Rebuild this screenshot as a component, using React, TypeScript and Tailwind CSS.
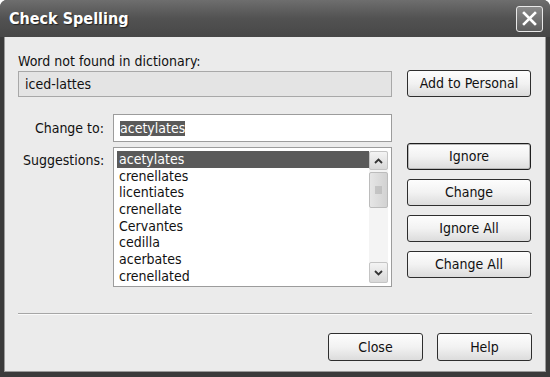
import React from "react";

const suggestions = [
  "acetylates",
  "crenellates",
  "licentiates",
  "crenellate",
  "Cervantes",
  "cedilla",
  "acerbates",
  "crenellated",
];

function XpButton({ label, wide, primary }: { label: string; wide?: boolean; primary?: boolean }) {
  return (
    <button
      className={`flex items-center justify-center rounded-[3px] border bg-gradient-to-b from-[#fdfdfd] via-[#f2f2f2] to-[#dcdcdc] text-[14px] text-[#111] ${
        primary ? "border-[#1e1e1e] shadow-[inset_0_0_0_1px_#b8b8b8]" : "border-[#2e2e2e]"
      } ${wide ? "h-[27px] w-[124px]" : "h-[28px] w-[95px]"}`}
    >
      {label}
    </button>
  );
}

export default function App() {
  return (
    <div
      className="flex h-[377px] w-[550px] flex-col overflow-hidden rounded-t-[7px] bg-[#3b3b3b]"
      style={{ fontFamily: '"DejaVu Sans Condensed", Tahoma, "DejaVu Sans", sans-serif' }}
    >
      {/* title bar */}
      <div className="flex h-[37px] items-center justify-between bg-gradient-to-b from-[#6e6e6e] via-[#525252] to-[#474747] pl-[9px] pr-[7px]">
        <span className="text-[16px] font-bold text-white [text-shadow:1px_1px_1px_#222]">Check Spelling</span>
        <div className="flex h-[26px] w-[27px] items-center justify-center rounded-[3px] border border-[#e8e8e8] bg-gradient-to-b from-[#8a8a8a] to-[#5e5e5e]">
          <svg width="15" height="15" viewBox="0 0 15 15">
            <path d="M2 2 L13 13 M13 2 L2 13" stroke="white" strokeWidth="2.6" strokeLinecap="square" />
          </svg>
        </div>
      </div>

      {/* body */}
      <div className="mx-[4px] mb-[5px] flex flex-1 flex-col border-x border-b border-[#9a9a9a] bg-[#ebebeb] pl-[13px] pr-[13px] text-[14px] text-[#111]">
        <div className="mt-[15px] flex">
          <div className="flex w-[374px] flex-col">
            <div className="h-[18px] leading-[18px]">Word not found in dictionary:</div>
            <div className="mt-[1px] flex h-[26px] items-center border border-[#a8a8a8] bg-[#e4e4e4] pl-[6px]">iced-lattes</div>
          </div>
          <div className="ml-[15px] mt-[18px]">
            <XpButton label="Add to Personal" wide />
          </div>
        </div>

        <div className="mt-[17px] flex items-center">
          <div className="w-[86px] text-right">Change to:</div>
          <div className="ml-[9px] flex h-[28px] w-[279px] items-center border border-[#9c9c9c] bg-white pl-[6px]">
            <span className="bg-[#5a5a5a] leading-[15px] text-white">acetylates</span>
          </div>
        </div>

        <div className="mt-[5px] flex">
          <div className="w-[95px] pl-[5px] pt-[3px]">Suggestions:</div>
          <div className="flex h-[140px] w-[279px] border border-[#9c9c9c] bg-white p-[3px]">
            <div className="flex flex-1 flex-col">
              {suggestions.map((s, i) => (
                <div
                  key={s}
                  className={`h-[16.7px] pl-[2px] leading-[16.7px] ${i === 0 ? "bg-[#5a5a5a] text-white" : ""}`}
                >
                  {s}
                </div>
              ))}
            </div>
            <div className="flex w-[19px] flex-col justify-between bg-[#f4f4f4]">
              <div className="flex flex-col gap-[2px]">
                <div className="flex h-[19px] items-center justify-center rounded-[2px] border border-[#c4c4c4] bg-gradient-to-b from-[#f4f4f4] to-[#d8d8d8]">
                  <svg width="9" height="6" viewBox="0 0 9 6">
                    <path d="M1 5 L4.5 1.5 L8 5" stroke="#333" strokeWidth="1.8" fill="none" />
                  </svg>
                </div>
                <div className="flex h-[36px] items-center justify-center rounded-[2px] border border-[#bcbcbc] bg-gradient-to-r from-[#e6e6e6] to-[#d2d2d2]">
                  <svg width="7" height="8" viewBox="0 0 7 8">
                    <path d="M0 1h7M0 3h7M0 5h7M0 7h7" stroke="#aaa" strokeWidth="1" />
                  </svg>
                </div>
              </div>
              <div className="flex h-[21px] items-center justify-center rounded-[2px] border border-[#c4c4c4] bg-gradient-to-b from-[#f4f4f4] to-[#d8d8d8]">
                <svg width="9" height="6" viewBox="0 0 9 6">
                  <path d="M1 1 L4.5 4.5 L8 1" stroke="#333" strokeWidth="1.8" fill="none" />
                </svg>
              </div>
            </div>
          </div>
          <div className="ml-[15px] -mt-[4px] flex flex-col gap-[9px]">
            <XpButton label="Ignore" wide primary />
            <XpButton label="Change" wide />
            <XpButton label="Ignore All" wide />
            <XpButton label="Change All" wide />
          </div>
        </div>

        <div className="mt-[26px] border-t border-[#a6a6a6] shadow-[0_1px_0_#fafafa]" />

        <div className="mt-[19px] flex justify-end gap-[14px]">
          <XpButton label="Close" />
          <XpButton label="Help" />
        </div>
      </div>
    </div>
  );
}
